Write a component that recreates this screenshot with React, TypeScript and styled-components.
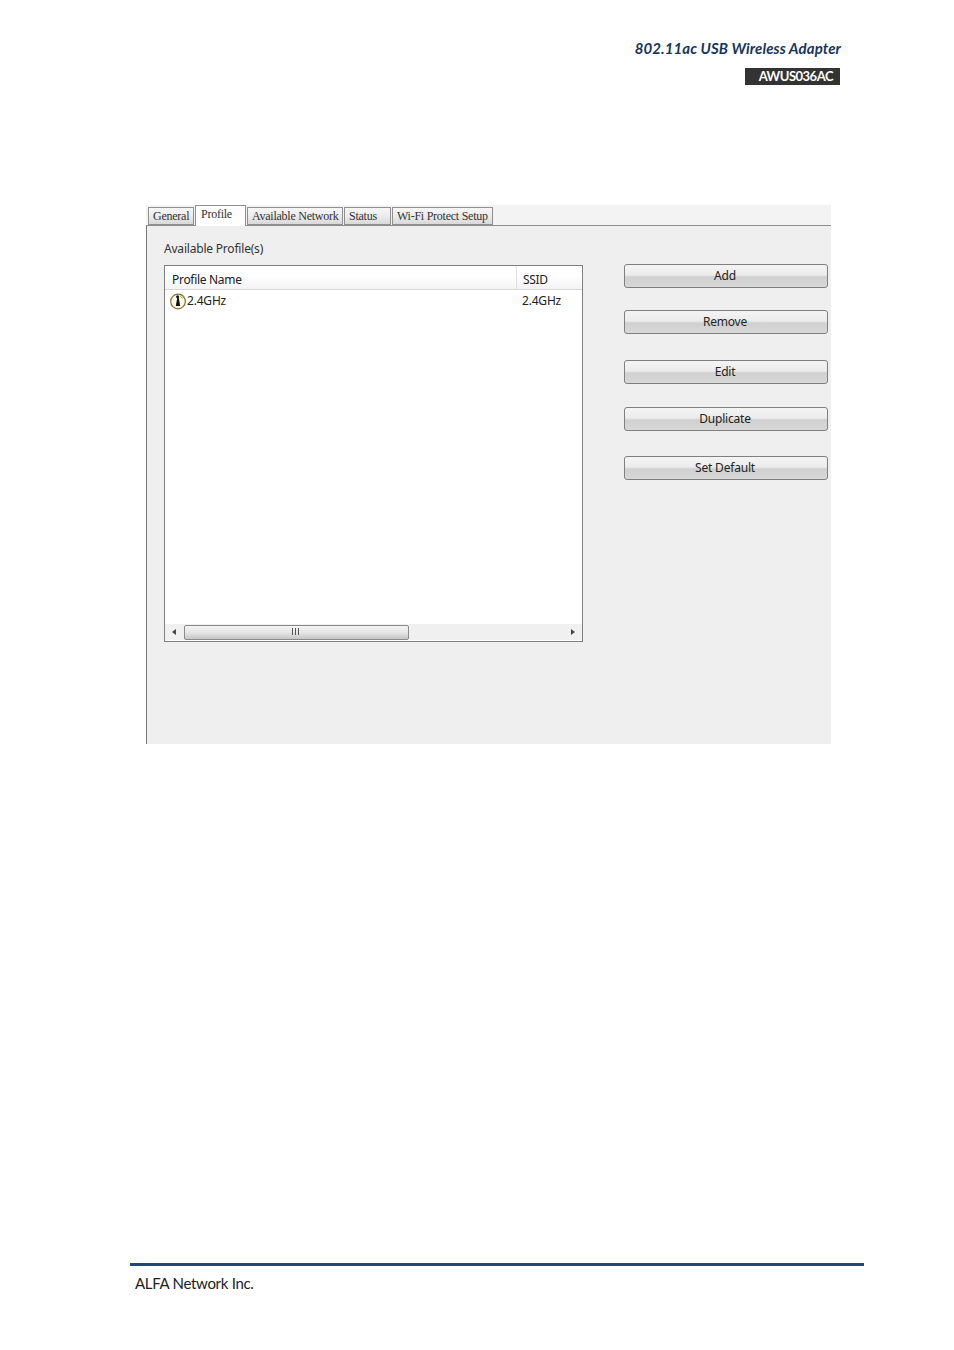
import styled, { createGlobalStyle } from 'styled-components'

const GlobalStyle = createGlobalStyle`
  html, body {
    margin: 0;
    padding: 0;
    background: #ffffff;
  }
`

const Page = styled.div`
  width: 954px;
  height: 1350px;
  display: flex;
  flex-direction: column;
  overflow: hidden;
  font-family: 'Noto Sans', sans-serif;
`

const Header = styled.header`
  display: flex;
  flex-direction: column;
  align-items: flex-end;
  padding: 39px 113px 0 0;
`

const Title = styled.div`
  font-family: Lato, sans-serif;
  font-size: 15px;
  font-weight: 700;
  font-style: italic;
  letter-spacing: 0.1px;
  line-height: 18px;
  color: #17365d;
`

const Badge = styled.div`
  width: 95px;
  height: 17px;
  margin: 11px 1px 0 0;
  padding-right: 7px;
  box-sizing: border-box;
  background: #333333;
  color: #ffffff;
  font-family: Lato, sans-serif;
  font-size: 13px;
  font-weight: 700;
  letter-spacing: -0.5px;
  line-height: 17px;
  text-align: right;
`

const Dialog = styled.section`
  width: 685px;
  height: 539px;
  margin: 120px 0 0 146px;
  display: flex;
  flex-direction: column;
  background: #efefef;
`

const TabStrip = styled.div`
  height: 21px;
  box-sizing: border-box;
  padding-left: 2px;
  display: flex;
  align-items: flex-end;
  gap: 1px;
  background: #f3f3f3;
  border-bottom: 1px solid #8f8f8f;
`

const Tab = styled.div<{ $width: number; $active?: boolean }>`
  width: ${(props) => props.$width}px;
  height: ${(props) => (props.$active ? 21 : 18)}px;
  margin-bottom: ${(props) => (props.$active ? -1 : 0)}px;
  box-sizing: border-box;
  display: flex;
  align-items: center;
  padding: 0 0 ${(props) => (props.$active ? 3 : 0)}px ${(props) => (props.$active ? 5 : 4)}px;
  border: 1px solid #8f8f8f;
  border-bottom: ${(props) => (props.$active ? 'none' : '1px solid #8f8f8f')};
  background: ${(props) =>
    props.$active ? '#ffffff' : 'linear-gradient(#f6f6f6 0%, #ececec 50%, #d9d9d9 100%)'};
  font-family: 'Liberation Serif', serif;
  font-size: 12px;
  letter-spacing: -0.25px;
  color: #333333;
  white-space: nowrap;
  position: relative;
`

const Panel = styled.div`
  flex: 1;
  display: flex;
  gap: 41px;
  padding: 14px 3px 0 17px;
  border-left: 1px solid #777777;
`

const ListColumn = styled.div`
  width: 419px;
  display: flex;
  flex-direction: column;
`

const GroupLabel = styled.div`
  height: 25px;
  font-size: 12px;
  letter-spacing: -0.2px;
  line-height: 17px;
  color: #333333;
`

const ListBox = styled.div`
  height: 377px;
  box-sizing: border-box;
  display: flex;
  flex-direction: column;
  background: #ffffff;
  border: 1px solid #808080;
`

const ListHead = styled.div`
  height: 24px;
  box-sizing: border-box;
  display: grid;
  grid-template-columns: 351px 1fr;
  border-bottom: 1px solid #d8d8d8;
  background: linear-gradient(#ffffff 0%, #ffffff 45%, #f3f3f3 100%);
`

const HeadCell = styled.div<{ $divider?: boolean }>`
  padding: 5px 0 0 ${(props) => (props.$divider ? 6 : 7)}px;
  font-size: 12px;
  letter-spacing: -0.3px;
  line-height: 17px;
  color: #222222;
  border-left: ${(props) => (props.$divider ? '1px solid #e0e0e0' : 'none')};
`

const ListRow = styled.div`
  flex: 1;
  display: grid;
  grid-template-columns: 351px 1fr;
  align-content: start;
  padding-top: 1px;
`

const NameCell = styled.div`
  height: 19px;
  padding-left: 5px;
  display: flex;
  align-items: center;
  font-size: 12px;
  letter-spacing: -0.2px;
  color: #222222;
`

const SsidCell = styled.div`
  height: 19px;
  padding-left: 6px;
  display: flex;
  align-items: center;
  font-size: 12px;
  letter-spacing: -0.2px;
  color: #222222;
`

const Scrollbar = styled.div`
  height: 16px;
  margin-bottom: 1px;
  display: flex;
  align-items: center;
  background: #f0f0f0;
`

const Arrow = styled.div<{ $dir: 'left' | 'right' }>`
  width: ${(props) => (props.$dir === 'left' ? 18 : 19)}px;
  margin-right: ${(props) => (props.$dir === 'left' ? 1 : 0)}px;
  display: flex;
  justify-content: center;
  &::before {
    content: '';
    border-top: 3px solid transparent;
    border-bottom: 3px solid transparent;
    ${(props) => (props.$dir === 'left' ? 'border-right' : 'border-left')}: 4px solid #444444;
  }
`

const Track = styled.div`
  flex: 1;
  height: 100%;
`

const Thumb = styled.div`
  width: 225px;
  height: 15px;
  box-sizing: border-box;
  display: flex;
  align-items: center;
  justify-content: center;
  gap: 2px;
  padding: 0 2px 2px 0;
  border: 1px solid #8a8a8a;
  border-radius: 2px;
  background: linear-gradient(#f3f3f3 0%, #e8e8e8 45%, #c6c6c6 100%);
`

const Grip = styled.span`
  width: 1px;
  height: 7px;
  background: #555555;
`

const ButtonColumn = styled.div`
  display: flex;
  flex-direction: column;
  padding-top: 24px;
`

const Button = styled.button<{ $space: number }>`
  width: 204px;
  height: 24px;
  margin-top: ${(props) => props.$space}px;
  padding: 0 2px 2px 0;
  border: 1px solid #7f7f7f;
  border-radius: 3px;
  background: linear-gradient(#f4f4f4 0%, #ececec 45%, #d0d0d0 55%, #d8d8d8 100%);
  font-family: 'Noto Sans', sans-serif;
  font-size: 12px;
  letter-spacing: -0.2px;
  color: #222222;
`

const Footer = styled.footer`
  width: 734px;
  box-sizing: border-box;
  margin: auto 0 57px 130px;
  border-top: 3px solid #1f497d;
  padding: 7px 0 0 5px;
  font-family: Lato, sans-serif;
  font-size: 15px;
  letter-spacing: -0.3px;
  line-height: 20px;
  color: #222222;
`

const tabs = [
  { label: 'General', width: 46 },
  { label: 'Profile', width: 51, active: true },
  { label: 'Available Network', width: 96 },
  { label: 'Status', width: 47 },
  { label: 'Wi-Fi Protect Setup', width: 101 },
]

const buttons = [
  { label: 'Add', space: 0 },
  { label: 'Remove', space: 22 },
  { label: 'Edit', space: 26 },
  { label: 'Duplicate', space: 23 },
  { label: 'Set Default', space: 25 },
]

function ProfileIcon() {
  return (
    <svg width="17" height="18" viewBox="0 0 17 18" fill="none">
      <circle cx="8" cy="9.5" r="7.3" fill="#fdfbe8" stroke="#94682c" strokeWidth="1.2" />
      <path d="M7.2 6h1.6l1.4 8h-4.4z" fill="#111111" />
      <circle cx="7.6" cy="4.8" r="1.5" fill="#111111" />
      <path d="M10.5 4.5c.9.4 1.4 1 1.7 1.9M11.5 2.5c1.5.6 2.4 1.5 2.9 2.9" stroke="#6fb52c" strokeWidth="1" />
    </svg>
  )
}

function App() {
  return (
    <>
      <GlobalStyle />
      <Page>
        <Header>
          <Title>802.11ac USB Wireless Adapter</Title>
          <Badge>AWUS036AC</Badge>
        </Header>
        <Dialog>
          <TabStrip>
            {tabs.map((tab) => (
              <Tab key={tab.label} $width={tab.width} $active={tab.active}>
                {tab.label}
              </Tab>
            ))}
          </TabStrip>
          <Panel>
            <ListColumn>
              <GroupLabel>Available Profile(s)</GroupLabel>
              <ListBox>
                <ListHead>
                  <HeadCell>Profile Name</HeadCell>
                  <HeadCell $divider>SSID</HeadCell>
                </ListHead>
                <ListRow>
                  <NameCell>
                    <ProfileIcon />
                    2.4GHz
                  </NameCell>
                  <SsidCell>2.4GHz</SsidCell>
                </ListRow>
                <Scrollbar>
                  <Arrow $dir="left" />
                  <Thumb>
                    <Grip />
                    <Grip />
                    <Grip />
                  </Thumb>
                  <Track />
                  <Arrow $dir="right" />
                </Scrollbar>
              </ListBox>
            </ListColumn>
            <ButtonColumn>
              {buttons.map((button) => (
                <Button key={button.label} $space={button.space}>
                  {button.label}
                </Button>
              ))}
            </ButtonColumn>
          </Panel>
        </Dialog>
        <Footer>ALFA Network Inc.</Footer>
      </Page>
    </>
  )
}

export default App
